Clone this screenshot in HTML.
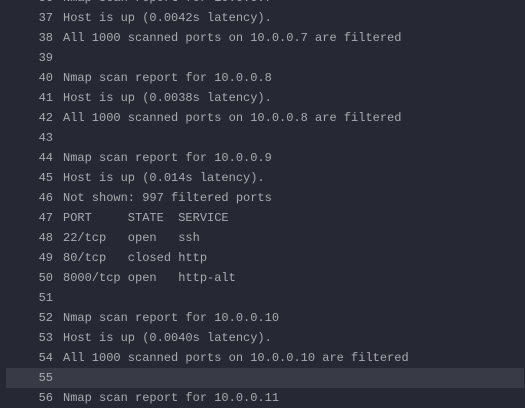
<!DOCTYPE html>
<html><head><style>
html,body{margin:0;padding:0;background:#262833;width:525px;height:401px;overflow:hidden}
.c{position:absolute;top:-12px;left:0;width:525px;font-family:"Liberation Mono",monospace;font-size:12px;color:#a8aab2}
.l{height:20px;line-height:20px;position:relative;white-space:pre}
.n{position:absolute;left:0;width:53px;text-align:right;color:#a8aab2}
.t{position:absolute;left:63px}
.h{background:#383a45;margin-left:6px;margin-right:1px}
.h .n{left:-6px}.h .t{left:57px}
</style></head><body><div class="c">
<div class="l"><span class="n">36</span><span class="t">Nmap scan report for 10.0.0.7</span></div>
<div class="l"><span class="n">37</span><span class="t">Host is up (0.0042s latency).</span></div>
<div class="l"><span class="n">38</span><span class="t">All 1000 scanned ports on 10.0.0.7 are filtered</span></div>
<div class="l"><span class="n">39</span><span class="t"></span></div>
<div class="l"><span class="n">40</span><span class="t">Nmap scan report for 10.0.0.8</span></div>
<div class="l"><span class="n">41</span><span class="t">Host is up (0.0038s latency).</span></div>
<div class="l"><span class="n">42</span><span class="t">All 1000 scanned ports on 10.0.0.8 are filtered</span></div>
<div class="l"><span class="n">43</span><span class="t"></span></div>
<div class="l"><span class="n">44</span><span class="t">Nmap scan report for 10.0.0.9</span></div>
<div class="l"><span class="n">45</span><span class="t">Host is up (0.014s latency).</span></div>
<div class="l"><span class="n">46</span><span class="t">Not shown: 997 filtered ports</span></div>
<div class="l"><span class="n">47</span><span class="t">PORT     STATE  SERVICE</span></div>
<div class="l"><span class="n">48</span><span class="t">22/tcp   open   ssh</span></div>
<div class="l"><span class="n">49</span><span class="t">80/tcp   closed http</span></div>
<div class="l"><span class="n">50</span><span class="t">8000/tcp open   http-alt</span></div>
<div class="l"><span class="n">51</span><span class="t"></span></div>
<div class="l"><span class="n">52</span><span class="t">Nmap scan report for 10.0.0.10</span></div>
<div class="l"><span class="n">53</span><span class="t">Host is up (0.0040s latency).</span></div>
<div class="l"><span class="n">54</span><span class="t">All 1000 scanned ports on 10.0.0.10 are filtered</span></div>
<div class="l h"><span class="n">55</span><span class="t"></span></div>
<div class="l"><span class="n">56</span><span class="t">Nmap scan report for 10.0.0.11</span></div>
</div></body></html>
